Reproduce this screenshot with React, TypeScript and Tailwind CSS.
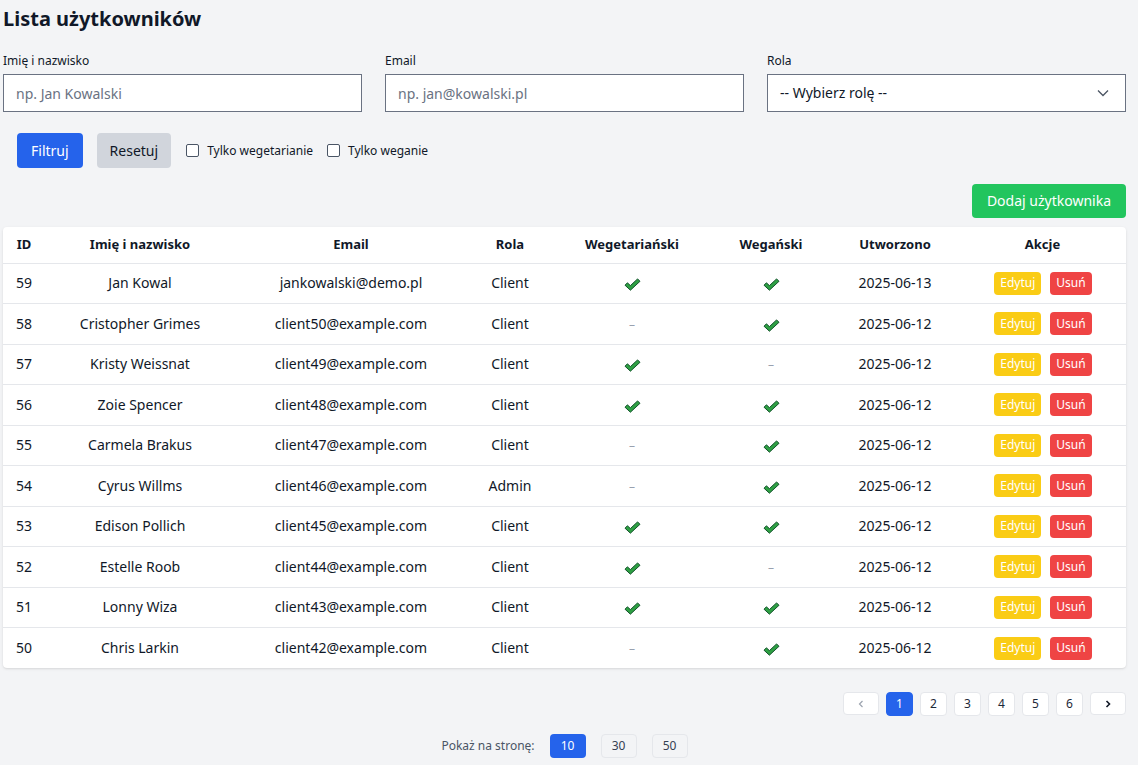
import React from "react";

type User = {
  id: number;
  name: string;
  email: string;
  role: string;
  vegetarian: boolean;
  vegan: boolean;
  created: string;
};

const users: User[] = [
  { id: 59, name: "Jan Kowal", email: "jankowalski@demo.pl", role: "Client", vegetarian: true, vegan: true, created: "2025-06-13" },
  { id: 58, name: "Cristopher Grimes", email: "client50@example.com", role: "Client", vegetarian: false, vegan: true, created: "2025-06-12" },
  { id: 57, name: "Kristy Weissnat", email: "client49@example.com", role: "Client", vegetarian: true, vegan: false, created: "2025-06-12" },
  { id: 56, name: "Zoie Spencer", email: "client48@example.com", role: "Client", vegetarian: true, vegan: true, created: "2025-06-12" },
  { id: 55, name: "Carmela Brakus", email: "client47@example.com", role: "Client", vegetarian: false, vegan: true, created: "2025-06-12" },
  { id: 54, name: "Cyrus Willms", email: "client46@example.com", role: "Admin", vegetarian: false, vegan: true, created: "2025-06-12" },
  { id: 53, name: "Edison Pollich", email: "client45@example.com", role: "Client", vegetarian: true, vegan: true, created: "2025-06-12" },
  { id: 52, name: "Estelle Roob", email: "client44@example.com", role: "Client", vegetarian: true, vegan: false, created: "2025-06-12" },
  { id: 51, name: "Lonny Wiza", email: "client43@example.com", role: "Client", vegetarian: true, vegan: true, created: "2025-06-12" },
  { id: 50, name: "Chris Larkin", email: "client42@example.com", role: "Client", vegetarian: false, vegan: true, created: "2025-06-12" },
];

const Check = () => (
  <svg width="17" height="13" viewBox="0 0 17 13" className="inline-block">
    <path
      d="M1 7.2 L3.4 4.8 L6.4 7.6 L13.6 0.9 L16 3.3 L6.4 12.2 Z"
      fill="#2ea043"
      stroke="#14532d"
      strokeWidth="1"
      strokeLinejoin="round"
    />
  </svg>
);

const Flag = ({ on }: { on: boolean }) =>
  on ? <Check /> : <span className="text-gray-400 text-xs">–</span>;

const App = () => {
  return (
    <div
      className="min-h-screen bg-[#f3f4f6] text-gray-900 pl-[3px] pr-3"
      style={{ fontFamily: '"Noto Sans", "Open Sans", sans-serif' }}
    >
      <h1 className="text-xl font-bold pt-[5px] h-[53px]">Lista użytkowników</h1>

      <div className="grid grid-cols-3 gap-[23px]">
        <div>
          <label className="block text-xs mb-[5px]">Imię i nazwisko</label>
          <input
            className="w-full h-[38px] border border-gray-500 bg-white px-3 text-sm placeholder:text-gray-500"
            placeholder="np. Jan Kowalski"
          />
        </div>
        <div>
          <label className="block text-xs mb-[5px]">Email</label>
          <input
            className="w-full h-[38px] border border-gray-500 bg-white px-3 text-sm placeholder:text-gray-500"
            placeholder="np. jan@kowalski.pl"
          />
        </div>
        <div>
          <label className="block text-xs mb-[5px]">Rola</label>
          <div className="w-full h-[38px] border border-gray-500 bg-white px-3 text-sm flex items-center justify-between">
            <span>-- Wybierz rolę --</span>
            <svg width="14" height="14" viewBox="0 0 14 14" className="mr-[3px]">
              <path d="M2 4.5 L7 9.5 L12 4.5" fill="none" stroke="#4b5563" strokeWidth="1.3" />
            </svg>
          </div>
        </div>
      </div>

      <div className="flex items-center gap-[14px] pl-[14px] mt-[21px] text-xs">
        <button className="bg-[#2563eb] text-white text-sm h-[35px] px-[14px] rounded">Filtruj</button>
        <button className="bg-gray-300 text-gray-900 text-sm h-[35px] px-[13px] rounded">Resetuj</button>
        <label className="flex items-center gap-[8px] ml-[1px]">
          <span className="w-[13px] h-[13px] border border-gray-600 rounded-[2px] bg-white" />
          Tylko wegetarianie
        </label>
        <label className="flex items-center gap-[8px]">
          <span className="w-[13px] h-[13px] border border-gray-600 rounded-[2px] bg-white" />
          Tylko weganie
        </label>
      </div>

      <div className="flex justify-end mt-[16px]">
        <button className="bg-[#22c55e] text-white text-sm h-[34px] px-[15px] rounded">Dodaj użytkownika</button>
      </div>

      <div className="mt-[9px] bg-white rounded shadow">
        <table className="w-full text-sm border-collapse">
          <colgroup>
            <col className="w-[42px]" />
            <col className="w-[190px]" />
            <col className="w-[232px]" />
            <col className="w-[86px]" />
            <col className="w-[158px]" />
            <col className="w-[120px]" />
            <col className="w-[128px]" />
            <col className="w-[167px]" />
          </colgroup>
          <thead>
            <tr className="h-[36px] border-b border-gray-200">
              {["ID", "Imię i nazwisko", "Email", "Rola", "Wegetariański", "Wegański", "Utworzono", "Akcje"].map((h) => (
                <th key={h} className="font-bold text-center text-[13px]">
                  {h}
                </th>
              ))}
            </tr>
          </thead>
          <tbody>
            {users.map((u, i) => (
              <tr key={u.id} className={`h-[40.5px] ${i < users.length - 1 ? "border-b border-gray-200" : ""}`}>
                <td className="text-center">{u.id}</td>
                <td className="text-center">{u.name}</td>
                <td className="text-center">{u.email}</td>
                <td className="text-center">{u.role}</td>
                <td className="text-center">
                  <Flag on={u.vegetarian} />
                </td>
                <td className="text-center">
                  <Flag on={u.vegan} />
                </td>
                <td className="text-center">{u.created}</td>
                <td className="text-center">
                  <div className="flex justify-center gap-[9px] pl-[1px]">
                    <button className="bg-[#facc15] text-white text-xs h-[23px] px-[6px] rounded">Edytuj</button>
                    <button className="bg-[#ef4444] text-white text-xs h-[23px] px-[6px] rounded">Usuń</button>
                  </div>
                </td>
              </tr>
            ))}
          </tbody>
        </table>
      </div>

      <div className="flex justify-end gap-[7px] mt-[24px] text-xs">
        <button className="w-[36px] h-[23px] bg-white border border-gray-200 rounded flex items-center justify-center">
          <svg width="8" height="8" viewBox="0 0 8 8">
            <path d="M5.5 1 L2.5 4 L5.5 7" fill="none" stroke="#9ca3af" strokeWidth="1.2" />
          </svg>
        </button>
        {[1, 2, 3, 4, 5, 6].map((p) => (
          <button
            key={p}
            className={`w-[27px] h-[24px] rounded border flex items-center justify-center ${
              p === 1 ? "bg-[#2563eb] border-[#2563eb] text-white" : "bg-white border-gray-200 text-gray-800"
            }`}
          >
            {p}
          </button>
        ))}
        <button className="w-[36px] h-[23px] bg-white border border-gray-200 rounded flex items-center justify-center">
          <svg width="8" height="8" viewBox="0 0 8 8">
            <path d="M2.5 1 L5.5 4 L2.5 7" fill="none" stroke="#111827" strokeWidth="1.6" />
          </svg>
        </button>
      </div>

      <div className="flex justify-center items-center gap-[15px] mt-[18px] text-xs">
        <span className="text-gray-600">Pokaż na stronę:</span>
        <button className="w-[36px] h-[24px] rounded bg-[#2563eb] text-white">10</button>
        <button className="w-[36px] h-[24px] rounded bg-[#f3f4f6] border border-gray-200 text-gray-700">30</button>
        <button className="w-[36px] h-[24px] rounded bg-[#f3f4f6] border border-gray-200 text-gray-700">50</button>
      </div>
    </div>
  );
};

export default App;
